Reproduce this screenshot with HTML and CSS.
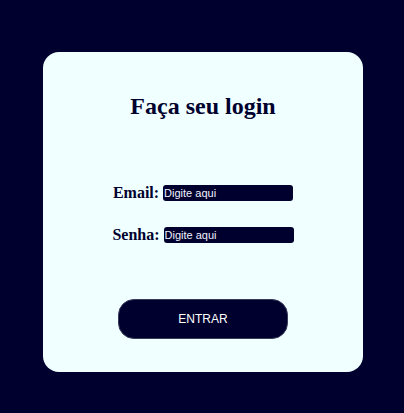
FILE: index.html
```
<!DOCTYPE html>
<html lang="pt">
<head>
<meta charset="utf-8">
<title>Login</title>
<link rel="stylesheet" href="styles.css">
</head>
<body>
<main class="card">
  <h1 class="title">Faça seu login</h1>
  <form class="form">
    <div class="row"><label class="label" for="email">Email:</label> <input class="field" id="email" type="text" placeholder="Digite aqui"></div>
    <div class="row"><label class="label" for="senha">Senha:</label> <input class="field" id="senha" type="password" placeholder="Digite aqui"></div>
    <button class="btn" type="button">ENTRAR</button>
  </form>
</main>
</body>
</html>
```
FILE: styles.css
```
html, body {
  margin: 0;
  padding: 0;
}
body {
  background: #00002e;
  height: 413px;
  overflow: hidden;
  font-family: "Liberation Serif", serif;
  color: #00002e;
}
.card {
  box-sizing: border-box;
  width: 320px;
  height: 320px;
  margin: 52px 0 0 43px;
  background: #f0ffff;
  border-radius: 16px;
  padding-top: 40px;
  display: flex;
  flex-direction: column;
  align-items: center;
}
.title {
  margin: 0;
  font-size: 24px;
  font-weight: bold;
  line-height: 28px;
}
.form {
  display: flex;
  flex-direction: column;
  align-items: center;
  margin-top: 64px;
}
.row {
  display: flex;
  align-items: center;
  height: 18px;
  margin-bottom: 24px;
}
.label {
  font-size: 16px;
  font-weight: bold;
  line-height: 18px;
  margin-right: 4px;
}
.field {
  box-sizing: border-box;
  width: 130px;
  height: 16px;
  border: none;
  border-radius: 3px;
  background: #00002e;
  color: #ffffff;
  font-family: "Liberation Sans", Arial, sans-serif;
  font-size: 11px;
  padding: 0 1px;
  outline: none;
}
.field::placeholder {
  color: #f0f2ff;
  opacity: 1;
}
.btn {
  margin-top: 31px;
  width: 170px;
  height: 40px;
  border: 1px solid #3a3a5a;
  border-radius: 16px;
  background: #00002e;
  color: #ffffff;
  font-family: "Liberation Sans", Arial, sans-serif;
  font-size: 12px;
  cursor: pointer;
}
```
